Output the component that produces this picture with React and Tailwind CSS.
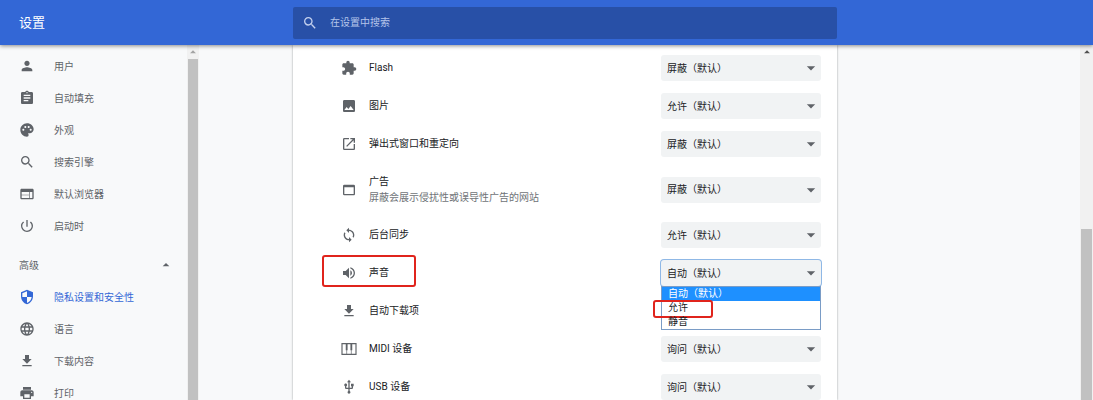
import React, { useState } from "react";
import {
  MdPerson,
  MdAssignment,
  MdPalette,
  MdSearch,
  MdWeb,
  MdPowerSettingsNew,
  MdLanguage,
  MdFileDownload,
  MdPrint,
  MdExtension,
  MdImage,
  MdOpenInNew,
  MdWebAsset,
  MdSync,
  MdVolumeUp,
  MdUsb,
  MdArrowDropDown,
  MdArrowDropUp,
} from "react-icons/md";

const ShieldIcon = ({ className }) => (
  <svg viewBox="0 0 24 24" fill="currentColor" className={className} aria-hidden="true">
    <path d="M12 1L3 5v6c0 5.55 3.84 10.74 9 12 5.16-1.26 9-6.45 9-12V5l-9-4zm0 10.99h7c-.53 4.12-3.28 7.79-7 8.94V12H5V6.3l7-3.11v8.8z" />
  </svg>
);

const PianoIcon = ({ className }) => (
  <svg viewBox="0 0 24 24" fill="none" stroke="currentColor" strokeWidth="1.75" className={className} aria-hidden="true">
    <path d="M1.5 4h21v16h-21z" />
    <path d="M8.5 13v7M15.5 13v7" strokeWidth="1" />
    <path d="M8.5 4v10M15.5 4v10" strokeWidth="2.75" />
  </svg>
);

const basicLinks = [
  { name: "用户", Icon: MdPerson },
  { name: "自动填充", Icon: MdAssignment },
  { name: "外观", Icon: MdPalette },
  { name: "搜索引擎", Icon: MdSearch },
  { name: "默认浏览器", Icon: MdWeb },
  { name: "启动时", Icon: MdPowerSettingsNew },
];

const advancedLinks = [
  { name: "隐私设置和安全性", Icon: ShieldIcon, active: true },
  { name: "语言", Icon: MdLanguage },
  { name: "下载内容", Icon: MdFileDownload },
  { name: "打印", Icon: MdPrint },
];

const permissions = [
  { id: "flash", name: "Flash", Icon: MdExtension, value: "屏蔽（默认）" },
  { id: "images", name: "图片", Icon: MdImage, value: "允许（默认）" },
  { id: "popups", name: "弹出式窗口和重定向", Icon: MdOpenInNew, value: "屏蔽（默认）" },
  { id: "ads", name: "广告", note: "屏蔽会展示侵扰性或误导性广告的网站", Icon: MdWebAsset, value: "屏蔽（默认）" },
  { id: "sync", name: "后台同步", Icon: MdSync, value: "允许（默认）" },
  { id: "sound", name: "声音", Icon: MdVolumeUp, value: "自动（默认）", open: true },
  { id: "downloads", name: "自动下载项", Icon: MdFileDownload, value: "询问（默认）" },
  { id: "midi", name: "MIDI 设备", Icon: PianoIcon, value: "询问（默认）" },
  { id: "usb", name: "USB 设备", Icon: MdUsb, value: "询问（默认）" },
];

const soundOptions = ["自动（默认）", "允许", "静音"];

const NavLink = ({ item }) => (
  <a
    href="#"
    className={`flex h-8 shrink-0 items-center gap-[19px] pl-[19px] ${item.active ? "text-[#3367d6]" : "text-[#5f6368]"}`}
  >
    <item.Icon className="size-4 shrink-0" />
    <span>{item.name}</span>
  </a>
);

const SoundList = ({ selected, onSelect }) => (
  <ul role="listbox" aria-label="声音" className="absolute left-0 top-full z-10 w-full border border-[#7a9cc6] bg-white">
    {soundOptions.map((option) => (
      <li
        key={option}
        role="option"
        aria-selected={option === selected}
        onClick={() => onSelect(option)}
        className={`relative h-[14px] px-[6px] leading-[14px] ${option === selected ? "bg-[#1e90ff] text-white" : ""}`}
      >
        {option}
        {option === "允许" && (
          <span className="absolute -left-[9px] -top-[1px] h-[18px] w-[60px] rounded-[3px] border-2 border-[#e0241c]" />
        )}
      </li>
    ))}
  </ul>
);

const PermissionRow = ({ item }) => {
  const [value, setValue] = useState(item.value);

  return (
    <div className={`flex shrink-0 items-center pl-12 pr-4 ${item.note ? "h-[53px]" : "h-[38px]"}`}>
      <div className="relative flex flex-1 items-center gap-3">
        <item.Icon className="size-4 shrink-0 text-[#5f6368]" />
        <label htmlFor={item.id}>
          <span className="block leading-4">{item.name}</span>
          {item.note && <span className="block leading-4 text-[#6f7377]">{item.note}</span>}
        </label>
        {item.open && (
          <span className="absolute -left-[19px] -top-[10px] h-[32px] w-[94px] rounded-[3px] border-2 border-[#e0241c]" />
        )}
      </div>
      <div className="relative w-[160px]">
        <select
          id={item.id}
          value={value}
          onChange={(e) => setValue(e.target.value)}
          className={`block h-[26px] w-full appearance-none rounded-[3px] bg-[#f1f3f4] px-[6px] outline-none ${item.open ? "ring-1 ring-[#8fb8e6]" : ""}`}
        >
          <option>{item.value}</option>
          {item.open && soundOptions.slice(1).map((option) => <option key={option}>{option}</option>)}
        </select>
        <MdArrowDropDown className="pointer-events-none absolute right-0 top-[3px] size-5 text-[#5f6368]" />
        {item.open && <SoundList selected={value} onSelect={setValue} />}
      </div>
    </div>
  );
};

const App = () => {
  return (
    <div className="flex h-screen flex-col overflow-hidden bg-[#f8f9fa] text-[10px] text-[#202124] [font-family:Roboto,'Noto_Sans_CJK_SC',sans-serif]">
      <header className="z-20 flex h-[45px] shrink-0 items-center bg-[#3367d6] text-white shadow-[0_1px_4px_rgba(0,0,0,0.45)]">
        <h1 className="w-[293px] shrink-0 pl-[19px] text-[13px]">设置</h1>
        <label className="flex h-8 max-w-[544px] flex-1 items-center gap-3 rounded-[2px] bg-[#2850a7] pl-[9px] text-[#c3d0ee]">
          <MdSearch className="size-4" />
          <input
            type="search"
            aria-label="在设置中搜索"
            placeholder="在设置中搜索"
            className="flex-1 bg-transparent outline-none placeholder:text-[#b5c5ea]"
          />
        </label>
      </header>

      <div className="flex min-h-0 flex-1">
        <nav className="flex w-[187px] shrink-0 flex-col overflow-hidden pt-[5px]">
          {basicLinks.map((item) => (
            <NavLink key={item.name} item={item} />
          ))}
          <button className="mt-[7px] flex h-8 w-full shrink-0 items-center justify-between pl-[19px] pr-[13px] text-[#5f6368]">
            高级
            <MdArrowDropUp className="size-4" />
          </button>
          {advancedLinks.map((item) => (
            <NavLink key={item.name} item={item} />
          ))}
        </nav>
        <div className="flex w-3 shrink-0 flex-col items-center bg-[#f1f1f1]">
          <MdArrowDropUp className="size-[14px] shrink-0 text-[#a3a3a3]" />
          <div className="w-[10px] flex-1 bg-[#c1c1c1]" />
        </div>

        <main className="flex min-w-0 flex-1 overflow-hidden pl-[94px]">
          <section className="flex max-w-[544px] flex-1 flex-col bg-white pt-1 shadow-[0_0_2px_rgba(60,64,67,0.5)]">
            {permissions.map((item) => (
              <PermissionRow key={item.id} item={item} />
            ))}
          </section>
        </main>

        <div className="flex w-[13px] shrink-0 flex-col items-center bg-[#f1f1f1]">
          <MdArrowDropUp className="size-[14px] shrink-0 text-[#505050]" />
          <div className="mt-[170px] w-[11px] flex-1 bg-[#c1c1c1]" />
        </div>
      </div>
    </div>
  );
};

export default App;
